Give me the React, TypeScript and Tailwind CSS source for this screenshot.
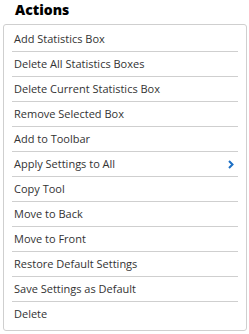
import { useState } from "react";

const items = [
  "Add Statistics Box",
  "Delete All Statistics Boxes",
  "Delete Current Statistics Box",
  "Remove Selected Box",
  "Add to Toolbar",
  "Apply Settings to All",
  "Copy Tool",
  "Move to Back",
  "Move to Front",
  "Restore Default Settings",
  "Save Settings as Default",
  "Delete",
];

function Chevron() {
  return (
    <svg width="6" height="9" viewBox="0 0 6 9" className="text-[#1c6fc4]">
      <path d="M1 1 L4.5 4.5 L1 8" fill="none" stroke="currentColor" strokeWidth="2" />
    </svg>
  );
}

export default function App() {
  const [active, setActive] = useState<string | null>(null);

  return (
    <div className="min-h-[334px] bg-white font-['Open_Sans',sans-serif] text-[#333]">
      <h2 className="mb-[5px] pl-[15px] text-[14px] font-extrabold leading-[19px] text-black">Actions</h2>
      <ul className="mx-[3px] w-[244px] rounded-[3px] border border-[#cfcfcf] px-2 pb-[3px] pt-[2px]">
        {items.map((item, i) => (
          <li
            key={item}
            onClick={() => setActive(item)}
            className={`flex h-[25px] cursor-pointer items-center justify-between pl-[2px] pr-1 text-[11px] ${
              i < items.length - 1 ? "border-b border-[#cfcfcf]" : "h-[24px]"
            } ${active === item ? "bg-gray-50" : ""}`}
          >
            <span>{item}</span>
            {item === "Apply Settings to All" && <Chevron />}
          </li>
        ))}
      </ul>
    </div>
  );
}
